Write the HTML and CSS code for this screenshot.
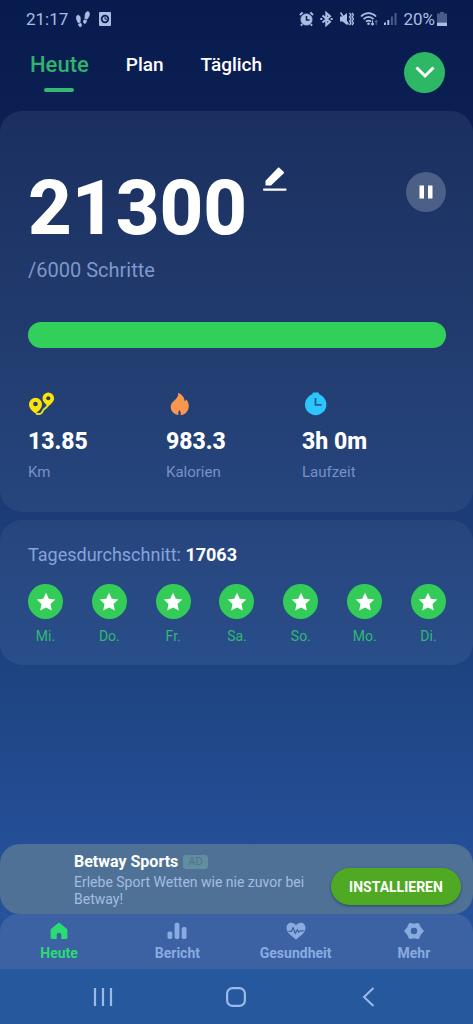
FILE: index.html
```html
<!DOCTYPE html>
<html lang="de">
<head>
<meta charset="utf-8">
<meta name="viewport" content="width=device-width, initial-scale=1">
<title>Schrittzähler</title>
<link rel="stylesheet" href="styles.css">
</head>
<body>
<svg class="defs" aria-hidden="true">
  <symbol id="star" viewBox="0 0 20 20"><path d="M10 .8l2.800 6 6.500.8-4.800 4.500 1.300 6.500L10 15.400l-5.800 3.200 1.300-6.500L.7 7.600l6.500-.8z"/></symbol>
</svg>
<div class="app">
  <div class="status">
    <span class="status-group">
      <span>21:17</span>
      <svg width="14" height="17" viewBox="0 0 14 17" fill="currentColor" stroke="currentColor" stroke-width=".6"><path d="M.3 6.500C.3 4.700 1.300 4 2.500 4.300c1.500.5 2.100 2.400 1.900 4.200-.2 1.300-.3 1.900-.1 2.700l-2.300.5C1.300 10 .3 8.500.3 6.500zM2.400 13l2.600-.7c.8 1.400.9 3.200-.4 3.500-1.200.2-2-1-2.200-2.800zM13.500 3.500C13.600 1.500 12.800.4 11.500.6 9.800 1 9.100 3 9 5c0 1.200-.1 1.800-.4 2.500l2.500.8c.9-1.600 2.300-2.800 2.400-4.800zM10.700 9.600l-2.600-.8c-.9 1.300-.9 3.300.3 3.700 1.200.3 2.200-1.100 2.300-2.900z"/></svg>
      <svg class="status-app" width="12" height="14" viewBox="0 0 12 14"><rect width="12" height="14" rx="1" fill="currentColor"/><circle cx="6" cy="7" r="3.300" fill="currentColor" stroke="#0b1f50" stroke-width="1.800"/><path d="M6 5v2.200h2" fill="none" stroke="#0b1f50"/></svg>
    </span>
    <span class="status-group status-right">
      <svg width="15" height="16" viewBox="0 0 15 16" fill="none" stroke="currentColor"><circle cx="7.500" cy="8.500" r="5.500" fill="currentColor"/><path d="M1 4l2.600-2.600M14 4l-2.600-2.600M3.200 13.200L2 14.700M11.800 13.200l1.200 1.500" stroke-width="2"/><path d="M7.500 5v4h3" stroke="#0b1f50" stroke-width="1.500"/></svg>
      <svg width="13" height="16" viewBox="0 0 13 16" fill="none" stroke="currentColor" stroke-width="2"><path d="M2.500 4.500l7.500 6.300-3.700 3.300V1.900L10 5.200l-7.500 6.300"/><path d="M.3 8h2M10.600 8h2" stroke-width="2"/></svg>
      <svg width="15" height="16" viewBox="0 0 15 16" fill="none" stroke="currentColor"><path d="M1 5.500h2.500L8 2v12l-4.500-3.500H1z" fill="currentColor" stroke="none"/><path d="M1.500 1.500l8 12" stroke-width="1.500"/><path d="M10.500 2l1.500 2-1.500 2 1.500 2-1.500 2 1.500 2-1.500 2M13 2l1.500 2L13 6l1.500 2L13 10l1.500 2L13 14" stroke-width="1.300"/></svg>
      <svg width="18" height="16" viewBox="0 0 18 16" fill="none" stroke="currentColor" stroke-width="1.800"><path d="M1 5.500c4.200-4.500 10.800-4.500 15 0M3.500 8.200c2.800-3 7.200-3 10 0M6 10.700c1.400-1.400 3.600-1.400 5 0"/><circle cx="8.500" cy="12.800" r="1.300" fill="currentColor" stroke="none"/><path d="M12.500 9.500v4.500M11 12.500l1.500 1.500 1.500-1.500" stroke-width="1.200"/><path d="M16.200 14V9.500M14.900 11l1.300-1.500 1.300 1.500" stroke-width="1" opacity=".5"/></svg>
      <svg width="13" height="16" viewBox="0 0 13 16" fill="currentColor"><path d="M0 11.500h2V14H0zM3.300 9h2v5h-2z"/><path d="M6.900 5.500h2V14h-2zM10.500 2h2v12h-2z" opacity=".4"/></svg>
      <span class="battery">20%<svg width="10" height="14" viewBox="0 0 10 14" fill="currentColor"><path d="M3 0h4v1.500h3V10.500H0v-9h3z" opacity=".4"/><path d="M0 10.500h10V14H0z"/></svg></span>
    </span>
  </div>

  <header class="top">
    <nav class="tabs">
      <a class="tab tab-active" href="#heute">Heute</a>
      <a class="tab" href="#plan">Plan</a>
      <a class="tab" href="#taeglich">Täglich</a>
    </nav>
    <button class="round expand" type="button" aria-label="Mehr anzeigen"><svg width="20" height="13" viewBox="0 0 20 13" fill="none" stroke="#fff" stroke-width="3"><path d="M1.500 1.500L10 10l8.500-8.500"/></svg></button>
  </header>

  <main class="main">
    <section class="card today">
      <div class="count-row">
        <h1 class="count">21300</h1>
        <button class="edit" type="button" aria-label="Schritte bearbeiten"><svg width="24" height="25" viewBox="0 0 24 25" fill="#fff"><path d="M2.500 18.500v-4.700L14.800 1c.6-.6 1.200-.6 1.800 0l4 3.800c.6.600.6 1.200 0 1.800L8 18.500z"/><rect y="21.500" width="23.500" height="2.300" rx="1"/></svg></button>
        <button class="round pause" type="button" aria-label="Pause"><svg width="14" height="14" viewBox="0 0 14 14" fill="#fff"><path d="M.5.500h4.500v13H.5zM9 .5h4.500v13H9z"/></svg></button>
      </div>
      <p class="goal">/6000 Schritte</p>
      <div class="progress" role="progressbar" aria-label="Schritte" aria-valuenow="100" aria-valuemin="0" aria-valuemax="100"><div class="progress-fill" style="width:100%"></div></div>
      <div class="metrics">
        <div class="metric">
          <svg width="28" height="24" viewBox="0 0 28 24"><path d="M8 21.500c4.500 1.500 6.200-.5 7-3 .6-2 3-1.500 5-5.500" fill="none" stroke="#e5e12a" stroke-width="2"/><path fill="#fbe309" d="M7.500 21.500C4 19 1 16.200 1 12.300a6.500 6.500 0 0 1 13 0c0 3.900-3 6.700-6.500 9.200zM20.300 14.300c-2.500-2-5.800-4.600-5.800-8a5.800 5.800 0 0 1 11.600 0c0 3.400-3.300 6-5.800 8z"/><circle cx="7.500" cy="12" r="2.300" fill="#243d6f"/><circle cx="20.300" cy="6.300" r="2" fill="#243d6f"/></svg>
          <strong class="value">13.85</strong><span class="label">Km</span>
        </div>
        <div class="metric">
          <svg width="28" height="24" viewBox="0 0 28 24"><path fill="#f99750" d="M12 .8c4.300 1.800 6.500 5 6.700 8.300.9-.3 1.400-.8 1.800-1.500 2.600 3.700 3.400 8.600.2 12.400-1.600 1.900-3.400 2.900-6 3.200.3-2.100-.2-3.800-1.300-5.200-1 1.500-1.400 3-.9 5-4-.5-7.600-3.300-7.800-7.700-.2-3.400 1.800-5.400 4.200-7.200C11.400 5.800 12.600 3.700 12 .8z"/></svg>
          <strong class="value">983.3</strong><span class="label">Kalorien</span>
        </div>
        <div class="metric">
          <svg width="28" height="24" viewBox="0 0 28 24"><circle cx="13.700" cy="12.500" r="10.700" fill="#2dc5fb"/><rect x="10.500" y=".6" width="6.500" height="3" rx="1" fill="#2dc5fb"/><path d="M13.500 6v6.800h6" fill="none" stroke="#1e5f94" stroke-width="1.800"/></svg>
          <strong class="value">3h 0m</strong><span class="label">Laufzeit</span>
        </div>
      </div>
    </section>

    <section class="card week">
      <h2 class="average">Tagesdurchschnitt: <strong>17063</strong></h2>
      <ul class="days">
        <li class="day"><span class="badge"><svg width="20" height="20"><use href="#star"/></svg></span>Mi.</li>
        <li class="day"><span class="badge"><svg width="20" height="20"><use href="#star"/></svg></span>Do.</li>
        <li class="day"><span class="badge"><svg width="20" height="20"><use href="#star"/></svg></span>Fr.</li>
        <li class="day"><span class="badge"><svg width="20" height="20"><use href="#star"/></svg></span>Sa.</li>
        <li class="day"><span class="badge"><svg width="20" height="20"><use href="#star"/></svg></span>So.</li>
        <li class="day"><span class="badge"><svg width="20" height="20"><use href="#star"/></svg></span>Mo.</li>
        <li class="day"><span class="badge"><svg width="20" height="20"><use href="#star"/></svg></span>Di.</li>
      </ul>
    </section>
  </main>

  <aside class="ad">
    <div class="ad-copy">
      <div class="ad-head"><strong>Betway Sports</strong><span class="ad-tag">AD</span></div>
      <p class="ad-text">Erlebe Sport Wetten wie nie zuvor bei Betway!</p>
    </div>
    <button class="install" type="button">INSTALLIEREN</button>
  </aside>

  <nav class="bottom">
    <a class="item item-active" href="#heute"><svg width="20" height="18" viewBox="0 0 20 18" fill="currentColor"><path d="M8.700 1.400a2 2 0 0 1 2.600 0l6.200 5.200c.6.500.9 1.200.9 2V15.400a1.600 1.600 0 0 1-1.600 1.600h-4.500v-3.900a2.300 2.300 0 0 0-4.600 0v3.900H3.200a1.600 1.600 0 0 1-1.600-1.600V8.600c0-.8.3-1.500.9-2z"/></svg>Heute</a>
    <a class="item" href="#bericht"><svg width="20" height="18" viewBox="0 0 20 18" fill="currentColor"><rect x=".5" y="9.500" width="4.800" height="7.500" rx="1.800"/><rect x="7.600" y=".8" width="4.800" height="16.200" rx="1.800"/><rect x="14.700" y="5" width="4.800" height="12" rx="1.800"/></svg>Bericht</a>
    <a class="item" href="#gesundheit"><svg width="20" height="18" viewBox="0 0 20 18"><path fill="currentColor" d="M10 17.500C5.500 14 .5 10.700.5 5.800.5 2.800 2.600.8 5.200.8c2 0 3.700.9 4.800 2.600C11.100 1.700 12.800.8 14.800.8c2.600 0 4.700 2 4.700 5 0 4.900-5 8.200-9.500 11.700z"/><path d="M2.500 9.300h3l1.600-3.500 2.200 5.500 2-3.500 1.300 2.200 1.600-1.200h3.500" fill="none" stroke="#3d63a4" stroke-width="1.300"/></svg>Gesundheit</a>
    <a class="item" href="#mehr"><svg width="20" height="18" viewBox="0 0 20 18"><path d="M6 2.200L10 3l4-.8L15.800 6l2.600 3-2.600 3-1.800 3.800-4-.8-4 .8L4.200 12 1.600 9l2.600-3z" fill="currentColor" stroke="currentColor" stroke-width="2.600" stroke-linejoin="round"/><circle cx="10" cy="9" r="3.200" fill="#3d63a4"/></svg>Mehr</a>
  </nav>

  <div class="system">
    <button type="button" aria-label="Letzte Apps"><svg width="20" height="20" viewBox="0 0 20 20" stroke="currentColor" stroke-width="2.200"><path d="M2 1v18M10 1v18M18 1v18"/></svg></button>
    <button type="button" aria-label="Startseite"><svg width="20" height="20" viewBox="0 0 20 20" fill="none" stroke="currentColor" stroke-width="2.200"><rect x="1.100" y="1.100" width="17.800" height="17.800" rx="5.500"/></svg></button>
    <button type="button" aria-label="Zurück"><svg width="20" height="20" viewBox="0 0 20 20" fill="none" stroke="currentColor" stroke-width="2"><path d="M14.500 1L5 10l9.500 9"/></svg></button>
  </div>
</div>
</body>
</html>
```

FILE: styles.css
```css
* { box-sizing: border-box; }
body { margin: 0; font-family: Roboto, "Noto Sans", sans-serif; color: #fff; }
h1, h2, p, ul { margin: 0; padding: 0; }
a { color: inherit; text-decoration: none; }
button { border: 0; padding: 0; background: none; color: inherit; font-family: inherit; }
svg { display: block; flex: none; }
.defs { position: absolute; width: 0; height: 0; }

.app {
  display: flex;
  flex-direction: column;
  min-height: 100vh;
  background: linear-gradient(#081b4e 0%, #0c1f52 11%, #193871 42%, #1e4380 65%, #25509a 85%, #26589e 100%);
}

.status {
  display: flex;
  justify-content: space-between;
  align-items: center;
  height: 38px;
  padding: 0 26px;
  color: #abbde2;
  font-size: 17px;
}
.status-group { display: flex; align-items: center; gap: 8px; }
.status-app { margin-left: 1px; }
.status-right { gap: 6px; }
.battery { display: flex; align-items: center; gap: 2px; }

.top {
  display: flex;
  justify-content: space-between;
  align-items: flex-start;
  height: 73px;
  padding: 14px 28px 0 30px;
}
.tabs { display: flex; align-items: flex-start; gap: 37px; }
.tab { font-size: 19px; font-weight: 500; line-height: 26px; }
.tab-active {
  display: flex;
  flex-direction: column;
  align-items: center;
  gap: 10px;
  color: #2fb36d;
  font-size: 22px;
}
.tab-active::after {
  content: "";
  width: 30px;
  height: 4px;
  border-radius: 2px;
  background: #35b873;
}
.round { display: flex; align-items: center; justify-content: center; border-radius: 50%; }
.expand { width: 41px; height: 41px; background: #2eb865; }

.main { display: flex; flex: 1; flex-direction: column; gap: 8px; }
.card { border-radius: 22px; padding: 0 27px 0 28px; background: linear-gradient(#1a2f5f, #213a6d 50%, #26467e); }
.today { padding-top: 53px; padding-bottom: 30px; }
.week { padding-top: 23px; padding-bottom: 20px; background: linear-gradient(#27457d, #294e8a); }

.count-row { display: flex; align-items: flex-start; height: 88px; }
.count { font-size: 76px; line-height: 88px; font-weight: 800; }
.edit { margin: 3px 0 0 16px; }
.pause { width: 40px; height: 40px; margin: 8px 0 0 auto; background: #4b5f87; }
.goal { margin-top: 6px; color: #7f98cc; font-size: 20px; line-height: 24px; }
.progress { height: 26px; margin: 40px 0 44px; border-radius: 13px; background: #294775; }
.progress-fill { height: 100%; border-radius: 13px; background: #33cf5b; }

.metrics { display: grid; grid-template-columns: 138fr 136fr 144fr; }
.value { display: block; margin-top: 12px; font-size: 23px; line-height: 28px; font-weight: 800; }
.label { display: block; margin-top: 6px; color: #7891c5; font-size: 15px; line-height: 20px; }

.average { color: #87a3db; font-size: 18px; line-height: 24px; font-weight: 400; }
.average strong { color: #fff; font-weight: 700; }
.days { display: flex; justify-content: space-between; margin-top: 17px; list-style: none; }
.day {
  display: flex;
  flex-direction: column;
  align-items: center;
  gap: 8px;
  width: 35px;
  color: #30b875;
  font-size: 14px;
  line-height: 18px;
}
.badge {
  display: flex;
  align-items: center;
  justify-content: center;
  width: 35px;
  height: 35px;
  border-radius: 50%;
  background: #33cc58;
  fill: #fff;
}

.ad {
  display: flex;
  align-items: flex-start;
  justify-content: space-between;
  min-height: 70px;
  padding: 8px 12px 6px 74px;
  border-radius: 20px;
  background: #507196;
}
.ad-head { display: flex; align-items: center; gap: 5px; font-size: 16px; line-height: 20px; }
.ad-tag {
  padding: 0 5px;
  border-radius: 3px;
  background: #628da1;
  color: #4c7587;
  font-size: 11px;
  line-height: 14px;
}
.ad-copy { flex: 0 1 245px; }
.ad-text { margin-top: 2px; color: #a2bde2; font-size: 14px; line-height: 17px; }
.install {
  width: 130px;
  height: 37px;
  margin-top: 16px;
  border-radius: 19px;
  background: #50a923;
  box-shadow: 0 1px 3px #26476b;
  font-size: 14px;
  font-weight: 700;
}

.bottom {
  display: grid;
  grid-template-columns: repeat(4, 1fr);
  height: 55px;
  border-radius: 18px 18px 0 0;
  background: #3c62a3;
  color: #8aabe0;
  font-size: 14px;
  font-weight: 700;
  line-height: 18px;
}
.item { display: flex; flex-direction: column; align-items: center; gap: 4px; padding-top: 8px; }
.item-active { color: #2bdc73; }

.system {
  display: grid;
  grid-template-columns: repeat(3, 1fr);
  height: 55px;
  padding: 0 38px 0 36px;
  background: #26589e;
  color: #9cbae8;
}
.system button { display: flex; align-items: center; justify-content: center; }
```
